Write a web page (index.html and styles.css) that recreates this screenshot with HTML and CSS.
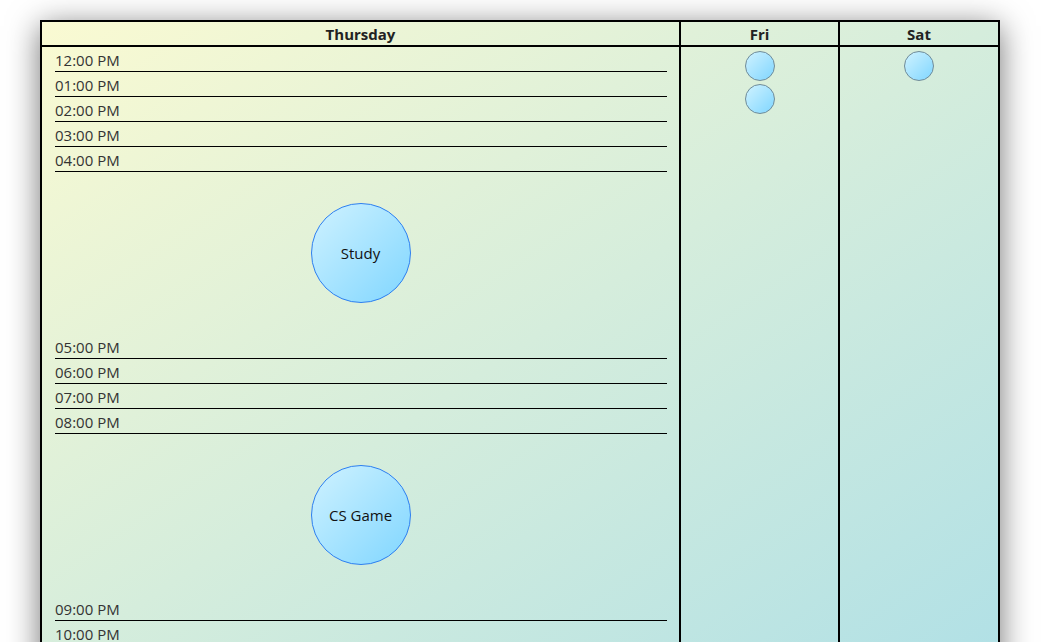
FILE: index.html
```html
<!DOCTYPE html>
<html lang="en">
<head>
    <meta charset="UTF-8">
    <meta name="viewport" content="width=device-width, initial-scale=1.0">
    <title>Week Planner</title>
    <link rel="stylesheet" href="styles.css">
</head>
<body>

    <div class="week">
        <div class="day today">
            <div class="day-head">Thursday</div>
            <div class="slot">12:00 PM</div>
            <div class="slot">01:00 PM</div>
            <div class="slot">02:00 PM</div>
            <div class="slot">03:00 PM</div>
            <div class="slot">04:00 PM</div>
            <div class="event-row"><div class="event">Study</div></div>
            <div class="slot">05:00 PM</div>
            <div class="slot">06:00 PM</div>
            <div class="slot">07:00 PM</div>
            <div class="slot">08:00 PM</div>
            <div class="event-row"><div class="event">CS Game</div></div>
            <div class="slot">09:00 PM</div>
            <div class="slot">10:00 PM</div>
            <div class="slot">11:00 PM</div>
        </div>

        <div class="day fri">
            <div class="day-head">Fri</div>
            <div class="dots">
                <div class="dot"></div>
                <div class="dot"></div>
            </div>
        </div>

        <div class="day sat">
            <div class="day-head">Sat</div>
            <div class="dots">
                <div class="dot"></div>
            </div>
        </div>
    </div>

</body>
</html>
```

FILE: styles.css
```css
html, body { margin: 0; background: #fff; }
body { font-family: "Open Sans", "Noto Sans", sans-serif; font-size: 15px; color: #222; padding: 20px 0 40px; }
.week { display: flex; width: 960px; margin: 0 0 0 40px; box-sizing: border-box; border: 2px solid #000; background: linear-gradient(to bottom right, #fafad2, #b0e0e6); box-shadow: 0 6px 30px rgba(0, 0, 0, 0.55); }
.day { display: flex; flex-direction: column; }
.today { width: 637px; }
.fri { width: 157px; border-left: 2px solid #000; }
.sat { width: 158px; border-left: 2px solid #000; }
.day-head { height: 22px; padding-top: 1px; line-height: 23px; text-align: center; font-weight: bold; border-bottom: 2px solid #000; }
.slot { margin: 0 12px 0 13px; height: 23px; padding-top: 1px; line-height: 24px; border-bottom: 1px solid #000; color: #333; }
.event-row { display: flex; justify-content: center; padding: 31px 0; }
.event { width: 98px; height: 98px; border-radius: 50%; border: 1px solid #2d7ff0; background: linear-gradient(135deg, #cff2ff, #80d6ff); display: flex; align-items: center; justify-content: center; color: #111; }
.dots { display: flex; flex-direction: column; align-items: center; gap: 3px; padding-top: 4px; }
.dot { width: 28px; height: 28px; border-radius: 50%; border: 1px solid #6f8b99; background: linear-gradient(135deg, #cff2ff, #80d6ff); }
```
